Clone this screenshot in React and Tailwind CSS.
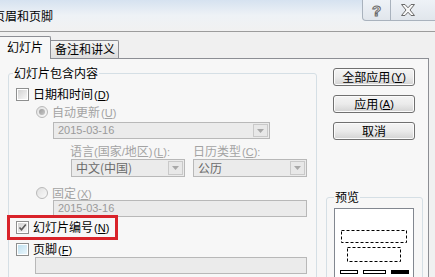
import React from "react";

const CJK = "font-['Noto_Sans_CJK_SC','Liberation_Sans',sans-serif]";

function Acc({ k }) {
  return (
    <span className="font-['Liberation_Sans',sans-serif] text-[11px] ml-[1px]">
      (<span className="underline">{k}</span>)
    </span>
  );
}

function Check({ checked, blue }) {
  return (
    <span className="w-[13px] h-[13px] border border-[#8e8f8f] bg-white flex items-center justify-center shrink-0">
      <span
        className={
          "w-[9px] h-[9px] flex items-center justify-center " +
          (blue
            ? "bg-gradient-to-br from-[#bfe0ef] to-[#eaf6fc]"
            : "bg-gradient-to-br from-[#d2d2d2] to-[#f7f7f7]")
        }
      >
        {checked && (
          <svg width="9" height="9" viewBox="0 0 9 9">
            <path d="M1.5 4.5 L3.5 6.8 L7.8 1.5" fill="none" stroke="#5a5a5a" strokeWidth="1.6" />
          </svg>
        )}
      </span>
    </span>
  );
}

function Radio({ selected }) {
  return (
    <span className="w-[12px] h-[12px] rounded-full border border-[#b9b9b9] bg-gradient-to-br from-[#e0e0e0] to-[#fafafa] flex items-center justify-center shrink-0">
      {selected && <span className="w-[6px] h-[6px] rounded-full bg-gradient-to-br from-[#9c9c9c] to-[#c8c8c8]" />}
    </span>
  );
}

function Field({ text, combo, dark, className }) {
  return (
    <div className={"flex border border-[#b8b8b8] bg-[#ebebeb] " + className}>
      <div
        className={
          "flex-1 flex items-center pl-[4px] " +
          (dark
            ? CJK + " text-[12px] leading-[14px] text-[#6a6a6a]"
            : "font-['Liberation_Sans',sans-serif] text-[11px] text-[#9a9a9a]")
        }
      >
        {text}
      </div>
      {combo && (
        <div className="m-[1px] w-[15px] border border-[#c9c9c9] bg-[#e8e8e8] flex items-center justify-center">
          <svg width="7" height="4" viewBox="0 0 7 4">
            <path d="M0 0 L7 0 L3.5 4 Z" fill="#a8a8a8" />
          </svg>
        </div>
      )}
    </div>
  );
}

function Btn({ children }) {
  return (
    <div className="ml-[7px] w-[82px] h-[18px] border border-[#707070] rounded-[3px] bg-gradient-to-b from-[#f4f4f4] via-[#ebebeb] to-[#d3d3d3] shadow-[inset_0_0_0_1px_#fbfbfb] flex items-center justify-center text-[12px] leading-[14px] text-black">
      {children}
    </div>
  );
}

export default function App() {
  return (
    <div className={"w-[435px] h-[277px] overflow-hidden bg-[#f0f0f0] text-black " + CJK}>
      {/* title bar */}
      <div className="h-[32px] border-b border-[#9c9c9c] bg-gradient-to-b from-[#d6e2f0] via-[#eef2f6] to-[#f1f1f1] flex">
        <div className="ml-[-7px] mt-[9px] text-[12px] leading-[14px] whitespace-nowrap">页眉和页脚</div>
        <div className="ml-auto flex h-[21px]">
          <div className="w-[29px] border-x border-b border-[#a9b2bd] rounded-bl-[4px] bg-gradient-to-b from-[#eef2f7] to-[#e1e6ec] flex items-center justify-center">
            <span className="font-['Liberation_Sans',sans-serif] font-bold text-[15px] leading-[15px] text-[#f8f8f8] [-webkit-text-stroke:1px_#6a6a6a]">?</span>
          </div>
          <div className="w-[44px] border-b border-[#a9b2bd] bg-gradient-to-b from-[#eef2f7] to-[#e1e6ec] flex items-center justify-center pr-[10px]">
            <svg width="14" height="12" viewBox="0 0 14 12">
              <path
                d="M0.5 0.5 L4 0.5 L7 3.8 L10 0.5 L13.5 0.5 L9 6 L13.5 11.5 L10 11.5 L7 8.2 L4 11.5 L0.5 11.5 L5 6 Z"
                fill="#f8f8f8"
                stroke="#6a6a6a"
                strokeWidth="1"
              />
            </svg>
          </div>
        </div>
      </div>

      {/* tabs */}
      <div className="mt-[4px] h-[22px] flex items-end">
        <div className="ml-[-2px] w-[53px] h-[23px] mb-[-1px] relative z-10 bg-[#f7f7f7] border-x border-t border-[#8c8e94] rounded-t-[2px] text-[12px] leading-[14px] pl-[8px] pt-[3px]">
          幻灯片
        </div>
        <div className="w-[68px] h-[18px] border-r border-t border-[#8c8e94] rounded-tr-[2px] bg-gradient-to-b from-[#f4f4f4] to-[#dedede] text-[12px] leading-[14px] pl-[4px] pt-[1px]">
          备注和讲义
        </div>
      </div>

      {/* panel */}
      <div className="ml-[-2px] w-[431px] h-[240px] border border-[#8c8e94] bg-[#f7f7f7] flex items-start">
        <fieldset className="ml-[9px] mt-[7px] w-[309px] h-[230px] border border-[#d5dfe5] rounded-[3px] p-0">
          <legend className="ml-[4px] px-[1px] text-[12px] leading-[14px]">幻灯片包含内容</legend>

          <div className="mt-[7px] h-[14px] flex items-center pl-[7px]">
            <Check />
            <span className="ml-[4px] text-[12px] leading-[14px] whitespace-nowrap">
              日期和时间<Acc k="D" />
            </span>
          </div>

          <div className="mt-[4px] h-[14px] flex items-center pl-[27px]">
            <Radio selected />
            <span className="ml-[4px] text-[12px] leading-[14px] text-[#a3a3a3] whitespace-nowrap">
              自动更新<Acc k="U" />
            </span>
          </div>

          <Field text="2015-03-16" combo className="mt-[3px] ml-[44px] w-[217px] h-[17px]" />

          <div className="mt-[5px] ml-[62px] flex gap-[8px]">
            <div className="w-[114px] flex flex-col">
              <div className="h-[14px] text-[12px] leading-[14px] text-[#a3a3a3] whitespace-nowrap -ml-[1px]">
                语言<span className="font-['Liberation_Sans',sans-serif] text-[11px]">(</span>国家<span className="font-['Liberation_Sans',sans-serif] text-[11px]">/</span>地区<span className="font-['Liberation_Sans',sans-serif] text-[11px]">)</span>
                <Acc k="L" />
                <span className="font-['Liberation_Sans',sans-serif] text-[11px]">:</span>
              </div>
              <Field text="中文(中国)" dark combo className="mt-[1px] h-[18px] w-full" />
            </div>
            <div className="w-[114px] flex flex-col">
              <div className="h-[14px] text-[12px] leading-[14px] text-[#a3a3a3] whitespace-nowrap">
                日历类型<Acc k="C" />
                <span className="font-['Liberation_Sans',sans-serif] text-[11px]">:</span>
              </div>
              <Field text="公历" dark combo className="mt-[1px] h-[18px] w-full" />
            </div>
          </div>

          <div className="mt-[9px] h-[14px] flex items-center pl-[27px]">
            <Radio />
            <span className="ml-[4px] text-[12px] leading-[14px] text-[#a3a3a3] whitespace-nowrap">
              固定<Acc k="X" />
            </span>
          </div>

          <Field text="2015-03-16" className="ml-[44px] w-[254px] h-[17px]" />

          <div className="relative mt-[-2px] ml-[-2px] w-[111px] h-[25px] border-[3px] border-[#d9232a] flex items-center pl-[6px]">
            <Check checked />
            <span className="ml-[4px] text-[12px] leading-[14px] whitespace-nowrap">
              幻灯片编号<Acc k="N" />
            </span>
          </div>

          <div className="mt-[2px] h-[14px] flex items-center pl-[7px]">
            <Check blue />
            <span className="ml-[4px] text-[12px] leading-[14px] whitespace-nowrap">
              页脚<Acc k="F" />
            </span>
          </div>

          <Field text="" className="mt-[1px] ml-[26px] w-[272px] h-[17px]" />
        </fieldset>

        <div className="ml-[9px] w-[97px] flex flex-col">
          <div className="mt-[9px] flex flex-col gap-[9px]">
            <Btn>
              全部应用<Acc k="Y" />
            </Btn>
            <Btn>
              应用<Acc k="A" />
            </Btn>
            <Btn>取消</Btn>
          </div>

          <fieldset className="mt-[50px] w-[97px] h-[100px] border border-[#d5dfe5] rounded-[3px] pl-[7px] pr-[8px] pt-0 pb-0">
            <legend className="px-[1px] text-[12px] leading-[14px]">预览</legend>
            <div className="mt-[4px] w-full h-[75px] border border-[#828790] bg-white">
              <svg width="77" height="70" viewBox="0 0 77 70" className="block">
                <rect x="6.5" y="21.5" width="65" height="12" fill="none" stroke="#000" strokeDasharray="3 2" />
                <rect x="12.5" y="38.5" width="53" height="14" fill="none" stroke="#000" strokeDasharray="3 2" />
                <rect x="5.5" y="61.5" width="17" height="3" fill="#fff" stroke="#000" />
                <rect x="28.5" y="61.5" width="22" height="3" fill="#fff" stroke="#000" />
                <rect x="56" y="61" width="18" height="4" fill="#000" />
              </svg>
            </div>
          </fieldset>
        </div>
      </div>
    </div>
  );
}
